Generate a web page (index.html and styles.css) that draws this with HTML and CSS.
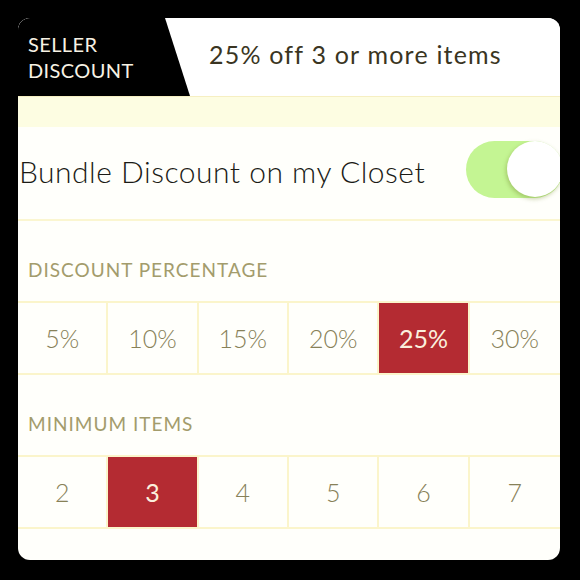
FILE: index.html
```html
<!DOCTYPE html>
<html lang="en">
<head>
    <meta charset="utf8"/>
    <title>Seller Discount</title>
    <meta name="viewport" content="width=device-width, initial-scale=1.0"/>
    <link rel="stylesheet" href="styles.css">
</head>

<body>
<div class="card">
    <div class="header">
        <div class="tab">
            <span>SELLER</span>
            <span>DISCOUNT</span>
        </div>
        <p class="summary">25% off 3 or more items</p>
    </div>

    <div class="band"></div>

    <div class="setting">
        <span class="setting-name">Bundle Discount on my Closet</span>
        <span class="toggle on"></span>
    </div>

    <p class="label">DISCOUNT PERCENTAGE</p>
    <ul class="options">
        <li>5%</li>
        <li>10%</li>
        <li>15%</li>
        <li>20%</li>
        <li class="selected">25%</li>
        <li>30%</li>
    </ul>

    <p class="label">MINIMUM ITEMS</p>
    <ul class="options">
        <li>2</li>
        <li class="selected">3</li>
        <li>4</li>
        <li>5</li>
        <li>6</li>
        <li>7</li>
    </ul>
</div>
</body>
</html>
```

FILE: styles.css
```css
body {
    margin: 0;
    padding: 18px 20px 20px 18px;
    background: #000;
    font-family: Lato, "Open Sans", sans-serif;
}

.card {
    width: 542px;
    height: 542px;
    background: #fffffb;
    border-radius: 12px;
    overflow: hidden;
}

.header {
    display: flex;
    align-items: center;
    height: 78px;
    background: #fff;
}

.tab {
    display: flex;
    flex-direction: column;
    justify-content: center;
    width: 172px;
    height: 100%;
    padding-left: 10px;
    box-sizing: border-box;
    background: #000;
    color: #f7f2e4;
    font-size: 20px;
    line-height: 26px;
    letter-spacing: 0.4px;
    clip-path: polygon(0 0, 147px 0, 172px 100%, 0 100%);
}

.summary {
    margin: 0 0 6px 19px;
    color: #3a3522;
    font-size: 25px;
    font-weight: 400;
    letter-spacing: 1.2px;
}

.band {
    height: 30px;
    background: #fdfde2;
    border-top: 1px solid #f6efc2;
}

.setting {
    display: flex;
    align-items: center;
    justify-content: space-between;
    height: 92px;
    border-bottom: 2px solid #fbf6d0;
}

.setting-name {
    padding: 0 0 5px 1px;
    color: #1b1b16;
    font-size: 30px;
    font-weight: 300;
    letter-spacing: 0.5px;
}

.toggle {
    position: relative;
    width: 97px;
    height: 57px;
    margin: 0 -3px 8px 0;
    border-radius: 29px;
    background: #c4f593;
}

.toggle.on::after {
    content: "";
    position: absolute;
    top: 0;
    right: 0;
    width: 56px;
    height: 56px;
    border-radius: 50%;
    background: #fff;
    box-shadow: -1px 2px 4px rgba(110, 130, 40, 0.4);
}

.label {
    margin: 0;
    padding: 38px 0 20px 10px;
    line-height: 22px;
    color: #a39c6c;
    font-size: 19px;
    letter-spacing: 1px;
}

.options {
    display: grid;
    grid-template-columns: repeat(6, 1fr);
    margin: 0;
    padding: 0;
    list-style: none;
    border-top: 2px solid #fbf5cb;
    border-bottom: 2px solid #fbf5cb;
}

.options li {
    display: flex;
    align-items: center;
    justify-content: center;
    height: 70px;
    border-right: 2px solid #fbf5cb;
    color: #878158;
    font-size: 25px;
    font-weight: 300;
}

.options li:last-child {
    border-right: none;
}

.options li.selected {
    background: #b42b32;
    color: #fbefdd;
    font-weight: 400;
}
```
